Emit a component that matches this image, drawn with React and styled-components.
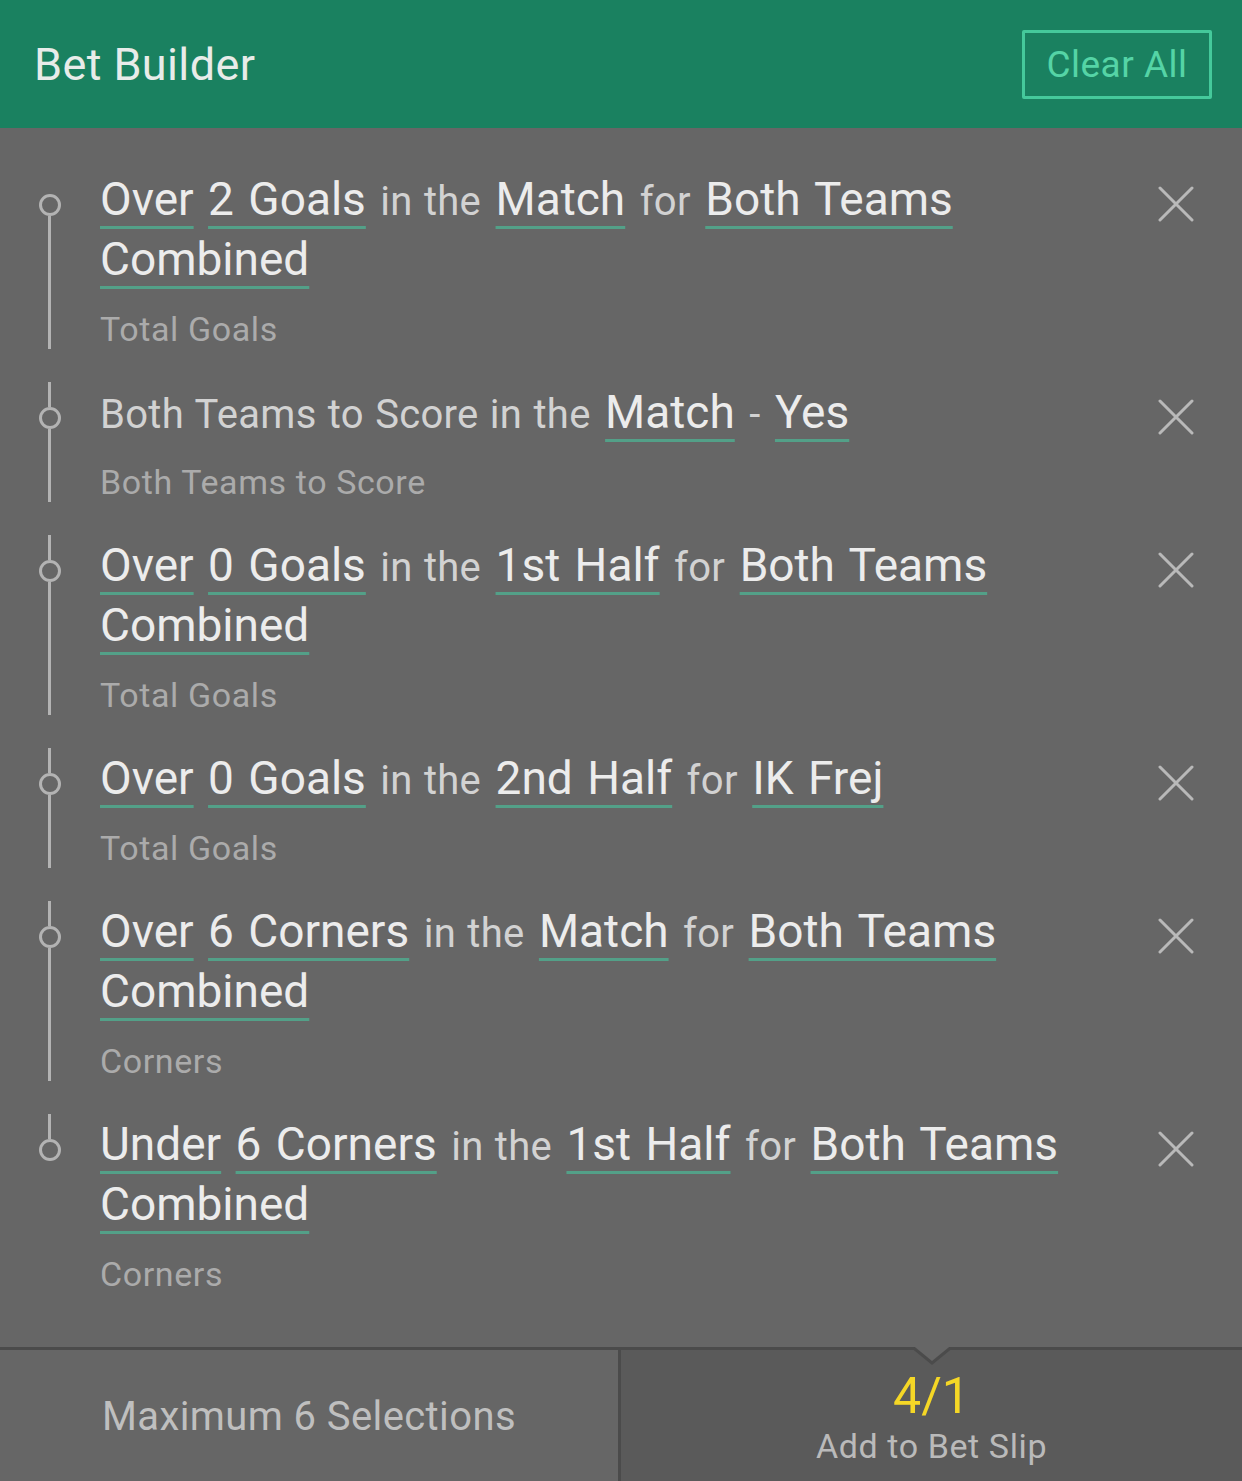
import React from "react";
import styled, { createGlobalStyle } from "styled-components";

const GlobalStyle = createGlobalStyle`
  html, body {
    margin: 0;
    padding: 0;
    background: #666666;
  }
  body {
    font-family: Roboto, "Liberation Sans", sans-serif;
    -webkit-font-smoothing: antialiased;
  }
`;

// header bar
const Header = styled.header`
  height: 128px;
  background: #1a8160;
  display: flex;
  align-items: center;
  justify-content: space-between;
  padding: 0 30px 0 34px;
  box-sizing: border-box;
`;

const Title = styled.h1`
  margin: 0;
  font-size: 45px;
  font-weight: 400;
  letter-spacing: 0.4px;
  color: #e8ece9;
`;

const ClearButton = styled.button`
  width: 190px;
  height: 69px;
  margin-top: 1px;
  border: 3px solid #45c99b;
  border-radius: 2px;
  background: transparent;
  color: #55d4a6;
  font-family: inherit;
  font-size: 37px;
  letter-spacing: 0.5px;
  padding: 0;
  cursor: pointer;
`;

// selection list
const List = styled.div`
  padding: 41px 0 53px;
`;

const Item = styled.div`
  display: flex;
  padding-bottom: 33px;
  &:last-child {
    padding-bottom: 0;
  }
`;

const Marker = styled.div`
  width: 100px;
  flex: none;
  display: flex;
  flex-direction: column;
  align-items: center;
  padding-right: 1px;
  box-sizing: border-box;
`;

const Segment = styled.div`
  width: 3px;
  background: ${(p) => (p.$hidden ? "transparent" : "#b3b3b3")};
  height: ${(p) => (p.$grow ? "auto" : "25px")};
  flex: ${(p) => (p.$grow ? "1" : "none")};
`;

const Dot = styled.div`
  width: 22px;
  height: 22px;
  border: 3px solid #b3b3b3;
  border-radius: 50%;
  box-sizing: border-box;
  flex: none;
`;

const Content = styled.div`
  flex: 1;
  padding-right: 30px;
`;

const Line = styled.div`
  font-size: 46px;
  line-height: 60px;
  word-spacing: 3px;
  color: #ececec;
`;

const Link = styled.span`
  text-decoration: underline;
  text-decoration-color: #53a088;
  text-decoration-thickness: 3px;
  text-underline-offset: 11px;
  text-decoration-skip-ink: none;
`;

const Joiner = styled.span`
  font-size: 40px;
  line-height: 1;
  letter-spacing: 0.3px;
  word-spacing: 1px;
  color: #d2d2d2;
`;

const Market = styled.div`
  margin-top: 20px;
  font-size: 34px;
  line-height: 40px;
  letter-spacing: 0.6px;
  color: #ababab;
`;

const CloseButton = styled.button`
  width: 70px;
  flex: none;
  align-self: flex-start;
  margin: 17px 31px 0 0;
  padding: 0;
  border: 0;
  background: none;
  display: flex;
  justify-content: center;
  cursor: pointer;
`;

// footer
const Footer = styled.footer`
  display: flex;
  height: 134px;
  border-top: 3px solid #4b4b4b;
  box-sizing: border-box;
`;

const LimitCell = styled.div`
  width: 621px;
  flex: none;
  border-right: 3px solid #4b4b4b;
  display: flex;
  align-items: center;
  justify-content: center;
  padding-top: 2px;
  box-sizing: border-box;
  font-size: 40px;
  letter-spacing: 0.4px;
  color: #bfbfbf;
`;

const SlipCell = styled.div`
  flex: 1;
  position: relative;
  background: #5a5a5a;
  display: flex;
  flex-direction: column;
  align-items: center;
  padding-top: 19px;
  box-sizing: border-box;

  &::before,
  &::after {
    content: "";
    position: absolute;
    left: 50%;
    transform: translateX(-50%);
    width: 0;
    height: 0;
    border-left: 22px solid transparent;
    border-right: 22px solid transparent;
  }
  &::before {
    top: -3px;
    border-top: 18px solid #4b4b4b;
  }
  &::after {
    top: -7px;
    border-top: 18px solid #666666;
  }
`;

const Odds = styled.div`
  font-size: 50px;
  line-height: 54px;
  color: #f5d726;
`;

const SlipLabel = styled.div`
  margin-top: 3px;
  font-size: 34px;
  line-height: 40px;
  letter-spacing: 0.6px;
  color: #bababa;
`;

const CloseIcon = () => (
  <svg width="36" height="36" viewBox="0 0 36 36">
    <path
      d="M2 2 L34 34 M34 2 L2 34"
      stroke="#b9b9b9"
      strokeWidth="3"
      strokeLinecap="round"
    />
  </svg>
);

const selections = [
  {
    parts: [
      ["Over", "link"],
      ["2 Goals", "link"],
      ["in the", "join"],
      ["Match", "link"],
      ["for", "join"],
      ["Both Teams Combined", "link"],
    ],
    market: "Total Goals",
  },
  {
    parts: [
      ["Both Teams to Score in the", "join"],
      ["Match", "link"],
      ["-", "join"],
      ["Yes", "link"],
    ],
    market: "Both Teams to Score",
  },
  {
    parts: [
      ["Over", "link"],
      ["0 Goals", "link"],
      ["in the", "join"],
      ["1st Half", "link"],
      ["for", "join"],
      ["Both Teams Combined", "link"],
    ],
    market: "Total Goals",
  },
  {
    parts: [
      ["Over", "link"],
      ["0 Goals", "link"],
      ["in the", "join"],
      ["2nd Half", "link"],
      ["for", "join"],
      ["IK Frej", "link"],
    ],
    market: "Total Goals",
  },
  {
    parts: [
      ["Over", "link"],
      ["6 Corners", "link"],
      ["in the", "join"],
      ["Match", "link"],
      ["for", "join"],
      ["Both Teams Combined", "link"],
    ],
    market: "Corners",
  },
  {
    parts: [
      ["Under", "link"],
      ["6 Corners", "link"],
      ["in the", "join"],
      ["1st Half", "link"],
      ["for", "join"],
      ["Both Teams Combined", "link"],
    ],
    market: "Corners",
  },
];

const App = () => {
  return (
    <>
      <GlobalStyle />
      <Header>
        <Title>Bet Builder</Title>
        <ClearButton>Clear All</ClearButton>
      </Header>
      <List>
        {selections.map((sel, i) => (
          <Item key={i}>
            <Marker>
              <Segment $hidden={i === 0} />
              <Dot />
              <Segment $grow $hidden={i === selections.length - 1} />
            </Marker>
            <Content>
              <Line>
                {sel.parts.map(([text, kind], j) => (
                  <React.Fragment key={j}>
                    {j > 0 && " "}
                    {kind === "link" ? (
                      <Link>{text}</Link>
                    ) : (
                      <Joiner>{text}</Joiner>
                    )}
                  </React.Fragment>
                ))}
              </Line>
              <Market>{sel.market}</Market>
            </Content>
            <CloseButton aria-label="Remove">
              <CloseIcon />
            </CloseButton>
          </Item>
        ))}
      </List>
      <Footer>
        <LimitCell>Maximum 6 Selections</LimitCell>
        <SlipCell>
          <Odds>4/1</Odds>
          <SlipLabel>Add to Bet Slip</SlipLabel>
        </SlipCell>
      </Footer>
    </>
  );
};

export default App;
